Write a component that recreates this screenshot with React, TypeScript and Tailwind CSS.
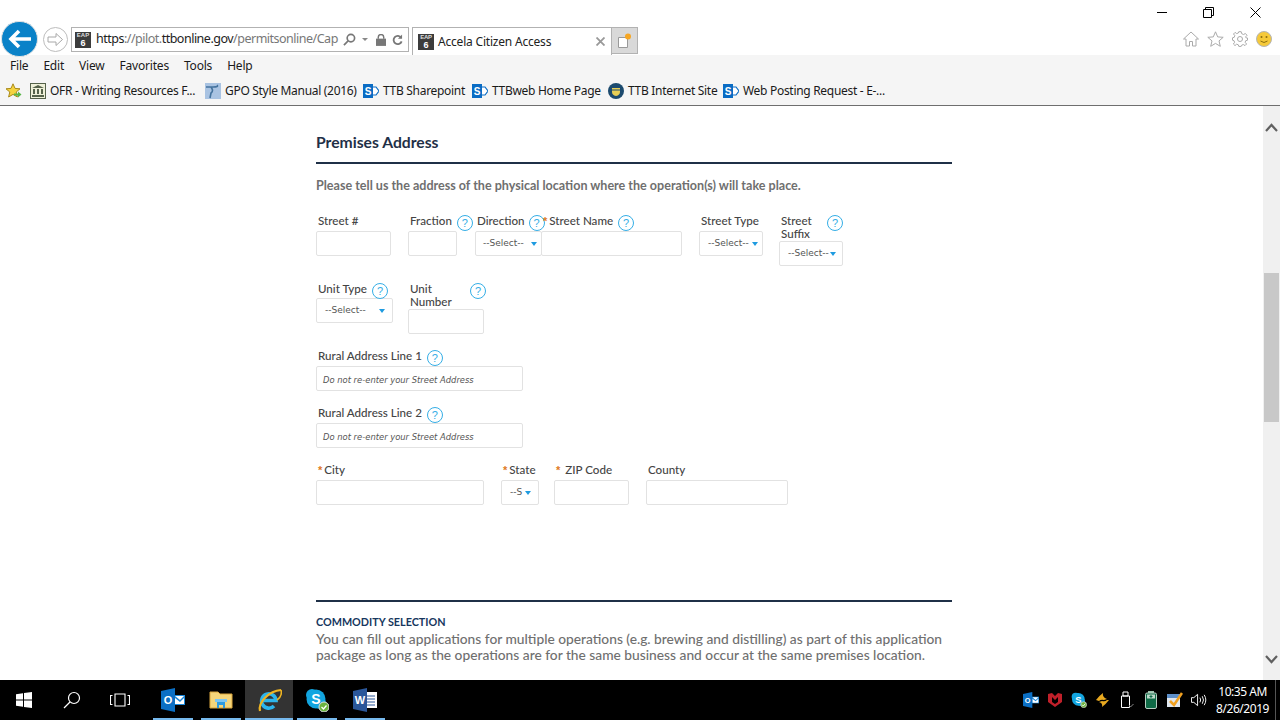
import React from "react";

const chrome = "font-['Noto_Sans',sans-serif]";

function Eap() {
  return (
    <span className="flex h-[16px] w-[16px] shrink-0 flex-col items-center bg-[#3c3c3c] font-['Liberation_Sans',sans-serif] font-bold leading-none text-[#dddddd]">
      <span className="text-[6px] leading-[7px]">EAP</span>
      <span className="text-[9px] leading-[9px] text-white">6</span>
    </span>
  );
}

function Sp() {
  return (
    <svg width="16" height="16" viewBox="0 0 16 16" className="shrink-0">
      <path d="M9 4 L13 4 L16 8 L13 12 L9 12Z" fill="#ffffff" stroke="#0a6cc4" strokeWidth="1.2" />
      <rect x="0" y="1" width="10" height="14" fill="#0a6cc4" />
      <text x="5" y="12" textAnchor="middle" fontSize="10" fontWeight="700" fill="#fff" fontFamily="Liberation Sans">S</text>
    </svg>
  );
}

function Fav({ icon, label, w }: { icon: React.ReactNode; label: string; w: number }) {
  return (
    <div className="flex items-center gap-[4px]" style={{ width: w }}>
      {icon}
      <span className="whitespace-nowrap">{label}</span>
    </div>
  );
}

function Help() {
  return (
    <span className="flex h-[16px] w-[16px] shrink-0 items-center justify-center rounded-full border border-[#35aee6] bg-white font-['Liberation_Sans',sans-serif] text-[11px] leading-none text-[#35aee6]">
      ?
    </span>
  );
}

function Star() {
  return <span className="font-['Liberation_Sans',sans-serif] text-[11px] font-bold leading-none text-[#e07a1f]">*</span>;
}

const box = "box-border h-[25px] rounded-[2px] border border-[#e2e2e2] bg-white";

function Input({ ph }: { ph?: string }) {
  return (
    <div className={`${box} flex w-full items-center whitespace-nowrap pl-[6px] pt-[3px] font-['DejaVu_Sans',sans-serif] text-[8.4px] italic text-[#555]`}>
      {ph}
    </div>
  );
}

function Select({ text = "--Select--", pl = 7, pr = 4 }: { text?: string; pl?: number; pr?: number }) {
  return (
    <div
      className={`${box} flex w-full items-center justify-between overflow-hidden font-['DejaVu_Sans',sans-serif] text-[9px] text-[#555]`}
      style={{ paddingLeft: pl, paddingRight: pr }}
    >
      <span className="mt-[1px] whitespace-nowrap">{text}</span>
      <span className="h-0 w-0 shrink-0 border-x-[3px] border-t-[4px] border-x-transparent border-t-[#1e9be0]" />
    </div>
  );
}

function Field({
  width,
  ml,
  labelH = 17,
  label,
  children,
}: {
  width: number;
  ml?: number;
  labelH?: number;
  label: React.ReactNode;
  children: React.ReactNode;
}) {
  return (
    <div className="shrink-0" style={{ width, marginLeft: ml ?? 0 }}>
      <div className="flex w-max items-start text-[11.6px] font-medium leading-[13px] text-[#444]" style={{ height: labelH }}>
        {label}
      </div>
      {children}
    </div>
  );
}

function Win() {
  return (
    <svg width="16" height="16" viewBox="0 0 16 16">
      <path d="M0 2.2 L7 1.2 V7.5 H0Z M8 1 L16 0 V7.5 H8Z M0 8.5 H7 V14.8 L0 13.8Z M8 8.5 H16 V16 L8 15Z" fill="#fff" />
    </svg>
  );
}

function TaskIcon({ children, active }: { children: React.ReactNode; active?: boolean }) {
  return (
    <div className={`relative flex h-[40px] w-[48px] items-center justify-center ${active ? "bg-[#333333]" : ""}`}>
      {children}
      <span className={`absolute bottom-0 h-[2px] bg-[#76b9ed] ${active ? "left-0 right-0" : "left-[4px] right-[4px]"}`} />
    </div>
  );
}

function Outlook({ s = 24 }: { s?: number }) {
  return (
    <svg width={s} height={s} viewBox="0 0 24 24">
      <path d="M13 7 H24 V17 H13Z" fill="#1a86d8" />
      <path d="M14 8 L19 12 L23 8Z" fill="#fff" />
      <path d="M14 10 L19 14 L23 10 V16 H14Z" fill="#fff" />
      <path d="M0 3 L14 0 V24 L0 21Z" fill="#0b6fc4" />
      <text x="7" y="16" textAnchor="middle" fontSize="11" fontWeight="700" fill="#fff" fontFamily="Liberation Sans">O</text>
    </svg>
  );
}

function Skype({ s = 24, b = 8 }: { s?: number; b?: number }) {
  return (
    <svg width={s} height={s} viewBox="0 0 24 24">
      <circle cx="7" cy="7" r="6" fill="#12a5e0" />
      <circle cx="15" cy="15" r="6" fill="#12a5e0" />
      <circle cx="11" cy="11" r="9.5" fill="#12a5e0" />
      <text x="11" y="16" textAnchor="middle" fontSize="14" fontWeight="700" fill="#fff" fontFamily="Liberation Sans">S</text>
      <circle cx="19" cy="19" r={b / 1.6} fill="#6cb33f" stroke="#ddd" strokeWidth="1" />
      <path d="M16.5 19 L18.5 21 L21.5 17.5" stroke="#fff" strokeWidth="1.3" fill="none" />
    </svg>
  );
}

export default function App() {
  return (
    <div className={`flex h-[720px] w-[1280px] flex-col overflow-hidden bg-white ${chrome}`}>
      {/* window chrome */}
      <div className="relative h-[55px] shrink-0 bg-white">
        <div className="flex h-[27px] items-start justify-end pr-[1px]">
          <div className="flex h-[27px] w-[46px] items-center justify-center pb-[2px]">
            <span className="h-px w-[10px] bg-black" />
          </div>
          <div className="flex h-[27px] w-[46px] items-center justify-center pb-[2px]">
            <svg width="11" height="11" viewBox="0 0 11 11" fill="none" stroke="#000">
              <path d="M0.5 2.5 H8.5 V10.5 H0.5Z M2.5 2.5 V0.5 H10.5 V8.5 H8.5" />
            </svg>
          </div>
          <div className="flex h-[27px] w-[48px] items-center justify-center pb-[2px]">
            <svg width="11" height="11" viewBox="0 0 11 11" stroke="#000">
              <path d="M0.5 0.5 L10.5 10.5 M10.5 0.5 L0.5 10.5" />
            </svg>
          </div>
        </div>
        <div className="flex h-[28px] items-start">
          <div className="relative z-10 ml-[1px] mt-[-6px] flex h-[36px] w-[37px] shrink-0 items-center justify-center rounded-full border border-[#e4e4e4] bg-[#0a82c8]">
            <svg width="24" height="20" viewBox="0 0 24 20" fill="none" stroke="#fff" strokeWidth="3.6">
              <path d="M23 10 H3 M11 2 L3 10 L11 18" />
            </svg>
          </div>
          <div className="ml-[5px] flex h-[25px] w-[25px] shrink-0 items-center justify-center rounded-full border border-[#bdbdbd]">
            <svg width="17" height="15" viewBox="0 0 17 15" fill="none" stroke="#a8a8a8">
              <path d="M1 5 H9 V1.5 L15.5 7.5 L9 13.5 V10 H1Z" />
            </svg>
          </div>
          <div className="ml-[3px] flex h-[25px] w-[338px] shrink-0 items-center border border-[#b2b2b2] pl-[3px] text-[12.5px] text-[#777]">
            <Eap />
            <span className="ml-[5px] w-[246px] shrink-0 whitespace-nowrap tracking-[-0.5px]">
              <span className="text-[#222]">https</span>://pilot.<span className="text-[#222]">ttbonline.gov</span>/permitsonline/Cap
            </span>
            <svg className="ml-[1px] shrink-0" width="13" height="13" viewBox="0 0 14 14" fill="none" stroke="#777" strokeWidth="1.8">
              <circle cx="8.5" cy="5.5" r="4" />
              <path d="M5.5 8.5 L1 13" />
            </svg>
            <span className="ml-[6px] h-0 w-0 shrink-0 border-x-[3px] border-t-[3px] border-x-transparent border-t-[#888]" />
            <svg className="ml-[8px] shrink-0" width="10" height="12" viewBox="0 0 11 13" fill="#777">
              <path d="M0 5 H11 V13 H0Z" />
              <path d="M2.5 5 V3.5 A3 3 0 0 1 8.5 3.5 V5" fill="none" stroke="#777" strokeWidth="1.6" />
            </svg>
            <svg className="ml-[6px] shrink-0" width="11" height="12" viewBox="0 0 12 13" fill="none" stroke="#777" strokeWidth="2">
              <path d="M10 4 A4.5 4.5 0 1 0 10.5 8" />
              <path d="M11 0.5 V5 H6.5" fill="#777" stroke="none" />
            </svg>
          </div>
          <div className="ml-[3px] flex h-[28px] w-[200px] shrink-0 items-center border border-b-0 border-[#b2b2b2] pl-[5px] text-[12px] tracking-[-0.2px] text-[#222]">
            <Eap />
            <span className="ml-[4px] whitespace-nowrap">Accela Citizen Access</span>
            <svg className="ml-auto mr-[6px]" width="9" height="9" viewBox="0 0 9 9" stroke="#999" strokeWidth="1.8">
              <path d="M0.5 0.5 L8.5 8.5 M8.5 0.5 L0.5 8.5" />
            </svg>
          </div>
          <div className="flex h-[27px] w-[26px] shrink-0 items-center justify-center border border-l-0 border-[#b2b2b2] bg-[#d9d9d9]">
            <svg width="15" height="15" viewBox="0 0 15 15">
              <path d="M1.5 4.5 H10.5 V14.5 H1.5Z" fill="#fff" stroke="#999" />
              <circle cx="11" cy="3.5" r="3" fill="#f6a623" />
            </svg>
          </div>
          <div className="ml-auto flex items-center gap-[8px] pr-[8px] pt-[4px]">
            <svg width="16" height="16" viewBox="0 0 16 16" fill="#fff" stroke="#aaa">
              <path d="M0.5 8 L8 1 L15.5 8 L13 8 V15 H9.5 V10.5 H6.5 V15 H3 V8Z" />
            </svg>
            <svg width="17" height="16" viewBox="0 0 17 16" fill="#fff" stroke="#aaa">
              <path d="M8.5 0.8 L10.7 5.9 L16.2 6.3 L12 9.9 L13.3 15.3 L8.5 12.4 L3.7 15.3 L5 9.9 L0.8 6.3 L6.3 5.9Z" />
            </svg>
            <svg width="16" height="16" viewBox="0 0 16 16" fill="none" stroke="#aaa">
              <circle cx="8" cy="8" r="2.5" />
              <path d="M6.8 0.7 H9.2 L9.7 2.7 L11.6 3.5 L13.4 2.5 L15 4.3 L13.6 5.9 L14.3 7 H15.5 V9.2 L13.6 9.8 L13.2 11.4 L14.6 13 L13 14.6 L11.3 13.5 L9.7 14.2 L9.2 15.4 H6.8 L6.3 13.8 L4.6 13.2 L3 14.6 L1.4 13 L2.6 11.3 L2 9.7 L0.5 9.2 V6.8 L2.2 6.3 L2.8 4.6 L1.5 3 L3.1 1.4 L4.7 2.6 L6.3 2Z" />
            </svg>
            <svg width="16" height="16" viewBox="0 0 16 16">
              <circle cx="8" cy="8" r="7.5" fill="#f5c93a" stroke="#b5b5b5" />
              <circle cx="5.5" cy="6" r="1" fill="#8a6d10" />
              <circle cx="10.5" cy="6" r="1" fill="#8a6d10" />
              <path d="M4.5 10 Q8 13 11.5 10" fill="none" stroke="#8a6d10" />
            </svg>
          </div>
        </div>
      </div>

      {/* menu bar */}
      <div className="flex h-[22px] shrink-0 items-center gap-[15px] bg-[#f5f5f5] pl-[10px] text-[12px] tracking-[-0.2px] text-[#1a1a1a]">
        <span>File</span>
        <span>Edit</span>
        <span>View</span>
        <span>Favorites</span>
        <span>Tools</span>
        <span>Help</span>
      </div>

      {/* favourites bar */}
      <div className="flex h-[29px] shrink-0 items-center border-b border-[#6e6e6e] bg-[#f5f5f5] pb-[1px] pl-[6px] text-[12px] tracking-[-0.3px] text-[#1a1a1a]">
        <svg className="mr-[8px] shrink-0" width="16" height="16" viewBox="0 0 16 16">
          <path d="M7 0.8 L9 5.4 L14 5.8 L10.2 9 L11.4 14 L7 11.4 L2.6 14 L3.8 9 L0 5.8 L5 5.4Z" fill="#f5d33f" stroke="#a98a1a" />
          <path d="M8 10.5 H12 V8.5 L15.5 11.5 L12 14.5 V12.5 H8Z" fill="#59b548" />
        </svg>
        <Fav
          w={175}
          label="OFR - Writing Resources F..."
          icon={
            <svg width="16" height="16" viewBox="0 0 16 16" className="shrink-0">
              <rect x="0.5" y="0.5" width="15" height="15" fill="#eef0d8" stroke="#55624a" />
              <path d="M2 5 L8 2 L14 5Z M3 6 H5 V11 H3Z M7 6 H9 V11 H7Z M11 6 H13 V11 H11Z M2 12 H14 V14 H2Z" fill="#55624a" />
            </svg>
          }
        />
        <Fav
          w={158}
          label="GPO Style Manual (2016)"
          icon={
            <svg width="16" height="16" viewBox="0 0 16 16" className="shrink-0">
              <rect width="16" height="16" fill="#a9c3e2" />
              <path d="M1 4 H8 Q14 4 12 2 M6 4 Q9 8 6 10 L5 15" fill="none" stroke="#44739e" strokeWidth="1.6" />
            </svg>
          }
        />
        <Fav w={109} label="TTB Sharepoint" icon={<Sp />} />
        <Fav w={136} label="TTBweb Home Page" icon={<Sp />} />
        <Fav
          w={115}
          label="TTB Internet Site"
          icon={
            <svg width="16" height="16" viewBox="0 0 16 16" className="shrink-0">
              <circle cx="8" cy="8" r="8" fill="#1c4a6e" />
              <path d="M4 5 H12 V9 Q12 12 8 13 Q4 12 4 9Z" fill="#e8cf56" />
              <path d="M4 7 H12" stroke="#1c4a6e" />
            </svg>
          }
        />
        <Fav w={170} label="Web Posting Request - E-..." icon={<Sp />} />
      </div>

      {/* page area */}
      <div className="flex h-[574px] shrink-0">
        <div className="min-w-0 flex-1 overflow-hidden pl-[316px] font-['Lato',sans-serif]">
          <div className="w-[636px]">
            <h2 className="mt-[26px] text-[15.7px] font-bold leading-[20px] text-[#1f3047]">Premises Address</h2>
            <div className="mt-[10px] h-[2px] bg-[#1f3047]" />
            <p className="mt-[14px] whitespace-nowrap text-[12.55px] font-bold leading-[16px] text-[#6f6f6f]">
              Please tell us the address of the physical location where the operation(s) will take place.
            </p>

            <div className="mt-[20px] flex items-start">
              <Field width={75} label={<span className="pl-[2px]">Street #</span>}>
                <Input />
              </Field>
              <Field
                width={49}
                ml={17}
                label={
                  <>
                    <span className="pl-[2px]">Fraction</span>
                    <span className="ml-[5px] mt-[1px]"><Help /></span>
                  </>
                }
              >
                <Input />
              </Field>
              <Field
                width={67}
                ml={18}
                label={
                  <>
                    <span className="pl-[2px]">Direction</span>
                    <span className="ml-[4px] mt-[1px]"><Help /></span>
                  </>
                }
              >
                <Select />
              </Field>
              <Field
                width={141}
                ml={-1}
                label={
                  <>
                    <span className="pl-[2px]"><Star /></span>
                    <span className="ml-[2px]">Street Name</span>
                    <span className="ml-[5px] mt-[1px]"><Help /></span>
                  </>
                }
              >
                <Input />
              </Field>
              <Field width={64} ml={17} label={<span className="pl-[2px]">Street Type</span>}>
                <Select pl={8} />
              </Field>
              <Field
                width={64}
                ml={16}
                labelH={27}
                label={
                  <>
                    <span className="w-[46px] pl-[2px]">Street Suffix</span>
                    <span className="ml-[2px] mt-[1px]"><Help /></span>
                  </>
                }
              >
                <Select pl={8} pr={6} />
              </Field>
            </div>

            <div className="mt-[16px] flex items-start">
              <Field
                width={77}
                labelH={16}
                label={
                  <>
                    <span className="pl-[2px]">Unit Type</span>
                    <span className="ml-[5px] mt-[1px]"><Help /></span>
                  </>
                }
              >
                <Select pl={8} pr={7} />
              </Field>
              <Field
                width={76}
                ml={15}
                labelH={27}
                label={
                  <>
                    <span className="w-[60px] pl-[2px]">Unit Number</span>
                    <span className="ml-[2px] mt-[1px]"><Help /></span>
                  </>
                }
              >
                <Input />
              </Field>
            </div>

            <div className="mt-[15px]">
              <Field
                width={207}
                labelH={17}
                label={
                  <>
                    <span className="pl-[2px]">Rural Address Line 1</span>
                    <span className="ml-[5px] mt-[1px]"><Help /></span>
                  </>
                }
              >
                <Input ph="Do not re-enter your Street Address" />
              </Field>
            </div>
            <div className="mt-[15px]">
              <Field
                width={207}
                labelH={17}
                label={
                  <>
                    <span className="pl-[2px]">Rural Address Line 2</span>
                    <span className="ml-[5px] mt-[1px]"><Help /></span>
                  </>
                }
              >
                <Input ph="Do not re-enter your Street Address" />
              </Field>
            </div>

            <div className="mt-[15px] flex items-start">
              <Field
                width={168}
                labelH={17}
                label={
                  <>
                    <span className="pl-[2px]"><Star /></span>
                    <span className="ml-[2px]">City</span>
                  </>
                }
              >
                <Input />
              </Field>
              <Field
                width={38}
                ml={17}
                labelH={17}
                label={
                  <>
                    <span className="pl-[2px]"><Star /></span>
                    <span className="ml-[2px]">State</span>
                  </>
                }
              >
                <Select text="--S" pl={8} pr={7} />
              </Field>
              <Field
                width={75}
                ml={15}
                labelH={17}
                label={
                  <>
                    <span className="pl-[2px]"><Star /></span>
                    <span className="ml-[5px]">ZIP Code</span>
                  </>
                }
              >
                <Input />
              </Field>
              <Field width={142} ml={17} labelH={17} label={<span className="pl-[2px]">County</span>}>
                <Input />
              </Field>
            </div>

            <div className="mt-[95px] h-[2px] bg-[#1f3047]" />
            <h3 className="mt-[13px] text-[10.8px] font-bold uppercase leading-[14px] text-[#17375e]">Commodity Selection</h3>
            <p className="mt-[2px] text-[13.78px] font-medium leading-[16px] text-[#6f6f6f]">
              You can fill out applications for multiple operations (e.g. brewing and distilling) as part of this application package as long as the operations are for the same business and occur at the same premises location.
            </p>
          </div>
        </div>

        {/* scrollbar */}
        <div className="flex h-full w-[17px] shrink-0 flex-col items-center bg-[#f0f0f0]">
          <svg className="mt-[17px] shrink-0" width="13" height="9" viewBox="0 0 13 9" fill="none" stroke="#606060" strokeWidth="2.2">
            <path d="M1 8 L6.5 2 L12 8" />
          </svg>
          <div className="mt-[141px] h-[149px] w-[15px] shrink-0 bg-[#c8c8c8]" />
          <svg className="mb-[16px] mt-auto shrink-0" width="13" height="9" viewBox="0 0 13 9" fill="none" stroke="#606060" strokeWidth="2.2">
            <path d="M1 1 L6.5 7 L12 1" />
          </svg>
        </div>
      </div>

      {/* taskbar */}
      <div className="flex h-[40px] shrink-0 items-center bg-black text-white">
        <div className="flex h-[40px] w-[48px] items-center justify-center"><Win /></div>
        <div className="flex h-[40px] w-[48px] items-center justify-center">
          <svg width="18" height="18" viewBox="0 0 18 18" fill="none" stroke="#fff" strokeWidth="1.2">
            <circle cx="11" cy="7" r="5.5" />
            <path d="M7 11 L1 17" />
          </svg>
        </div>
        <div className="flex h-[40px] w-[48px] items-center justify-center">
          <svg width="20" height="14" viewBox="0 0 20 14" fill="none" stroke="#fff" strokeWidth="1.1">
            <path d="M5 1 H15 V13 H5Z M2.5 2.5 H0.5 V11.5 H2.5 M17.5 2.5 H19.5 V11.5 H17.5" />
          </svg>
        </div>
        <div className="ml-[5px]" />
        <TaskIcon><Outlook /></TaskIcon>
        <TaskIcon>
          <svg width="24" height="20" viewBox="0 0 24 20">
            <path d="M1 2 H9 L11 4 H23 V18 H1Z" fill="#f5d67b" stroke="#d9a53c" />
            <path d="M8 18 V12 H16 V18 H14 V15 H10 V18Z" fill="#2d9be0" />
            <rect x="6" y="9" width="12" height="3" fill="#7cc6f2" />
          </svg>
        </TaskIcon>
        <TaskIcon active>
          <svg width="26" height="26" viewBox="0 0 26 26" fill="none">
            <path d="M6 13.5 H20 A7.2 7.2 0 1 0 18 19" stroke="#2cb5ec" strokeWidth="3.6" />
            <path d="M4 24 C2 15 13 4 25 3" stroke="#eeb422" strokeWidth="2.2" />
            <path d="M25 3 C26 7 24 11 21 13" stroke="#eeb422" strokeWidth="1.6" />
          </svg>
        </TaskIcon>
        <TaskIcon><Skype /></TaskIcon>
        <TaskIcon>
          <svg width="24" height="24" viewBox="0 0 24 24">
            <path d="M12 4 H24 V20 H12Z" fill="#fff" />
            <path d="M14 8 H22 M14 11 H22 M14 14 H22 M14 17 H22" stroke="#2b579a" />
            <path d="M0 3 L14 0 V24 L0 21Z" fill="#2b579a" />
            <text x="7" y="16" textAnchor="middle" fontSize="11" fontWeight="700" fill="#fff" fontFamily="Liberation Sans">W</text>
          </svg>
        </TaskIcon>

        <div className="ml-auto flex h-[40px] items-center">
          <div className="flex w-[16px] items-center justify-center"><Outlook s={16} /></div>
          <div className="ml-[8px] flex w-[16px] items-center justify-center">
            <svg width="16" height="16" viewBox="0 0 16 16">
              <path d="M1 2 L5 1 L8 4 L11 1 L15 2 V10 L8 15 L1 10Z M5 5 V10 L8 12 L11 10 V5 L8 8Z" fill="#c0202a" fillRule="evenodd" />
            </svg>
          </div>
          <div className="ml-[8px] flex w-[16px] items-center justify-center"><Skype s={16} b={7} /></div>
          <div className="ml-[8px] flex w-[16px] items-center justify-center">
            <svg width="16" height="16" viewBox="0 0 16 16">
              <path d="M1 8 Q5 3 8 1 Q7 5 12 7 L9 8 Q6 7 4 9Z M14 8 Q11 12 7 15 Q8 11 4 10 L7 9 Q10 10 12 8Z" fill="#e8a920" />
            </svg>
          </div>
          <div className="ml-[8px] flex w-[16px] items-center justify-center">
            <svg width="14" height="18" viewBox="0 0 14 18" fill="none" stroke="#fff">
              <path d="M3 1 H8 V5 H3Z M1.5 5 H9.5 V16.5 H1.5Z" />
              <path d="M9 14 L10.5 16 L13.5 13" stroke="#888" />
            </svg>
          </div>
          <div className="ml-[8px] flex w-[16px] items-center justify-center">
            <svg width="12" height="18" viewBox="0 0 12 18">
              <rect x="3" y="0" width="6" height="2" fill="#9ec5ae" />
              <rect x="0.5" y="2" width="11" height="15.5" rx="1.5" fill="#0f6a46" stroke="#b8cfc2" />
              <rect x="2" y="3.5" width="8" height="4" fill="#bcd7c8" />
              <path d="M6 4 V7 M4.5 5.5 H7.5" stroke="#0f6a46" />
            </svg>
          </div>
          <div className="ml-[8px] flex w-[16px] items-center justify-center">
            <svg width="16" height="16" viewBox="0 0 16 16">
              <rect y="2" width="13" height="13" fill="#dfe7ef" />
              <rect y="2" width="13" height="4" fill="#5d8fc9" />
              <path d="M3 9 L7 13 L15 1" stroke="#f0a020" strokeWidth="2.6" fill="none" />
            </svg>
          </div>
          <div className="ml-[8px] flex w-[16px] items-center justify-center">
            <svg width="17" height="14" viewBox="0 0 17 14" fill="none" stroke="#fff">
              <path d="M0.5 4.5 H3 L7 1 V13 L3 9.5 H0.5Z" />
              <path d="M9.5 4.5 Q11 7 9.5 9.5 M12 3 Q14.5 7 12 11 M14 1.5 Q17.5 7 14 12.5" />
            </svg>
          </div>
          <div className="ml-[8px] flex w-[54px] flex-col items-end text-right text-[12px] leading-[17px] tracking-[-0.45px] text-white">
            <span className="mr-[2px]">10:35 AM</span>
            <span>8/26/2019</span>
          </div>
          <div className="ml-[6px] h-[40px] w-[5px] border-l border-[#555]" />
        </div>
      </div>
    </div>
  );
}
